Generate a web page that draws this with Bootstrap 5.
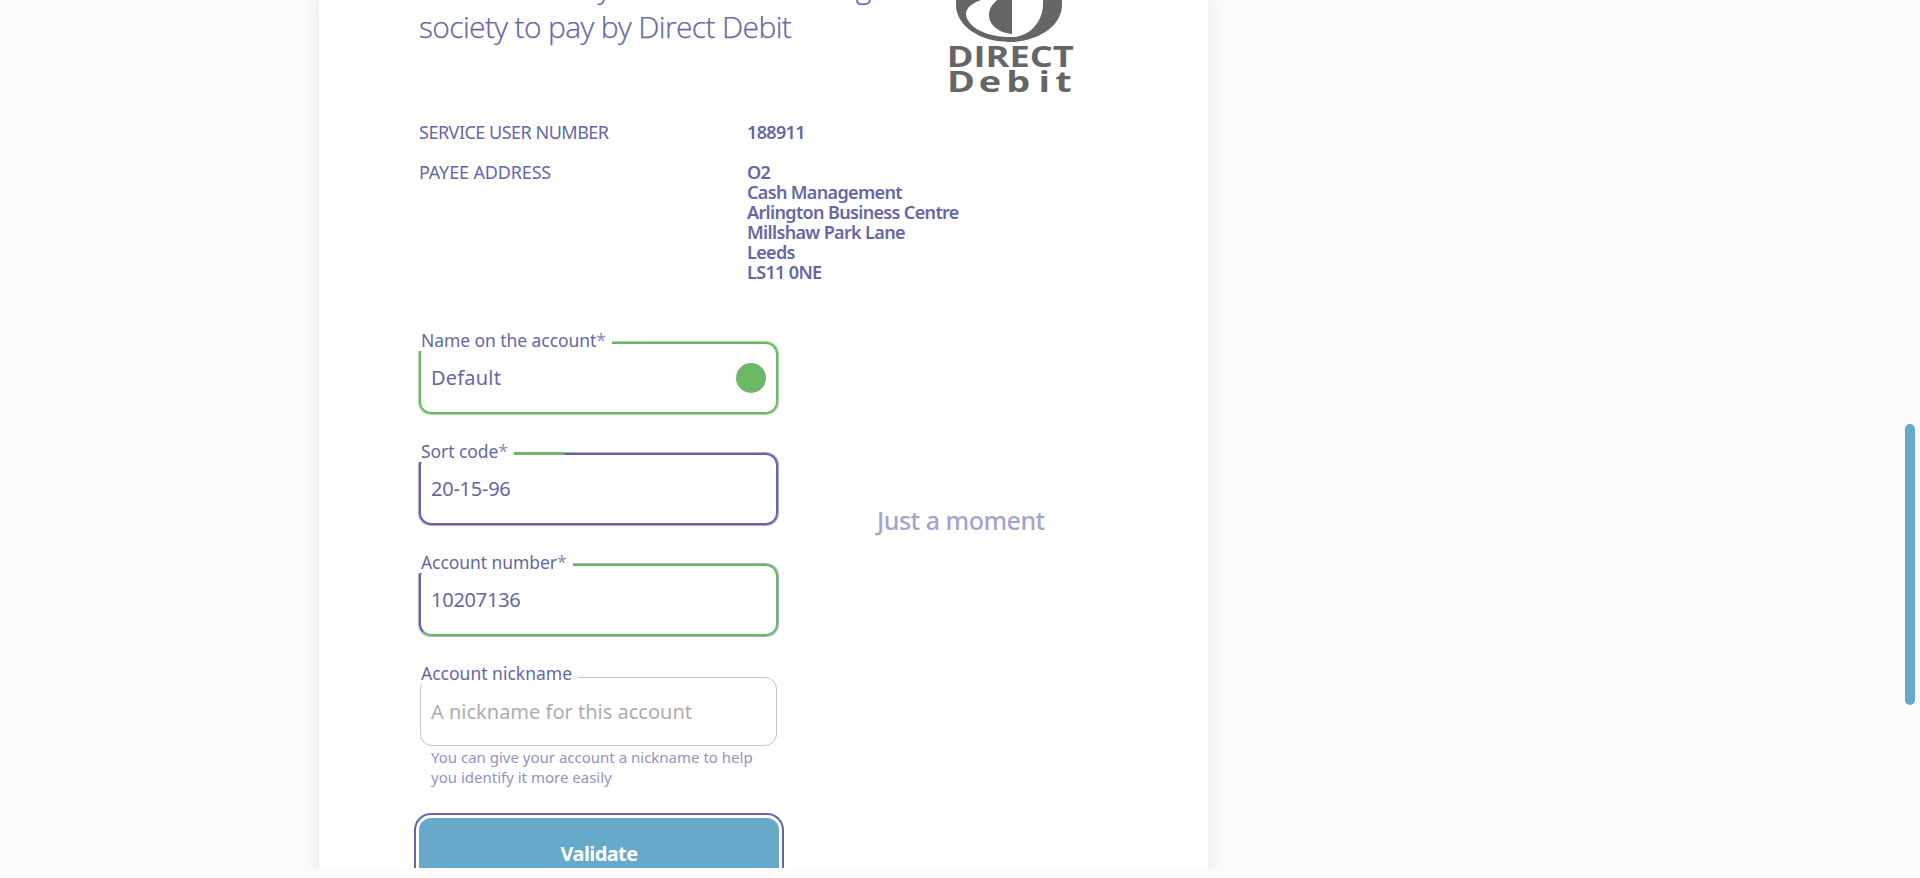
<!DOCTYPE html>
<html lang="en">
<head>
<meta charset="utf-8">
<meta name="viewport" content="width=device-width, initial-scale=1">
<title>Direct Debit</title>
<link href="https://cdn.jsdelivr.net/npm/bootstrap@5.3.0/dist/css/bootstrap.min.css" rel="stylesheet">
<style>
:root{--ink:#6567a5;--ok:#6cb867;--sea:#66a9cb}
body{background:#fbfbfb;color:var(--ink);font-family:"Noto Sans","Open Sans",sans-serif;height:878px;overflow:hidden}
.viewport{height:868px;overflow:hidden}
.sheet{width:889px;height:900px;margin-left:319px;padding-left:100px;background:#fff;box-shadow:0 0 16px rgba(0,0,0,.09)}
.masthead{height:122px}
.masthead h1{width:528px;margin:-33px 0 0;font-family:"Open Sans",sans-serif;font-size:30px;line-height:40px;font-weight:300;letter-spacing:-.64px;-webkit-text-stroke:.25px var(--ink);white-space:nowrap}
.logo{width:128px;height:96px;overflow:visible}
.facts{font-size:18px;line-height:20px}
.facts dt{width:328px;font-weight:400;letter-spacing:-.15px}
.facts dt.tight{letter-spacing:-.5px}
.facts dd{font-weight:600;margin:0;letter-spacing:-.65px}
.service{height:40px}
.account{padding-top:60px}
.entry{width:360px}
.field{position:relative;width:359px;height:72px;margin-bottom:39px;border:2px solid var(--ink);border-radius:12px;box-shadow:0 0 0 1px rgba(101,103,165,.55);padding:22px 9px 0 10px;font-size:20px;line-height:24px;letter-spacing:-.25px}
.field label{position:absolute;left:-3px;top:-15px;height:22px;padding:0 6px 0 3px;background:#fff;font-size:17.5px;line-height:23px;letter-spacing:-.07px;white-space:nowrap}
.field label i{font-style:normal;opacity:.75}
.field .dot{position:absolute;right:10px;top:19px;width:30px;height:30px;border-radius:50%;background:var(--ok)}
.field.done{border-color:var(--ok);box-shadow:0 0 0 1px rgba(108,184,103,.55);letter-spacing:.2px}
.field.sweep{border-color:var(--ok);border-left-color:var(--ink);margin-bottom:41px}
.field .trace{position:absolute;left:91px;top:-3px;width:54px;height:3px;background:var(--ok);clip-path:polygon(0 0,90% 0,100% 100%,0 100%)}
.field.idle{width:357px;height:69px;margin:0 0 0 1px;border:1px solid #c5c5c5;box-shadow:none;color:#adadad;letter-spacing:0}
.field.idle label{color:var(--ink);left:-2px;top:-16px;padding-left:2px;letter-spacing:0}
.hint{font-size:15px;line-height:20px;color:#9293c3;margin:1px 0 0 12px;white-space:nowrap}
.validate,.validate:hover{height:70px;margin-top:31px;border-radius:12px;border:0;background:var(--sea);color:#fff;font-weight:700;font-size:20px;line-height:24px;letter-spacing:-.6px;outline:2px solid var(--ink);outline-offset:3px;padding:1px 0 0}
.wait{font-size:25px;line-height:30px;font-weight:500;letter-spacing:-.5px;color:#a5a3cf;margin:163px 0 0 98px;white-space:nowrap}
.thumb{position:fixed;left:1905px;top:423.5px;width:10px;height:281px;border-radius:5px;background:var(--sea)}
</style>
</head>
<body>
<main class="viewport">
<section class="sheet">
  <header class="masthead d-flex align-items-start">
    <h1>Instruction to your bank or building<br>society to pay by Direct Debit</h1>
    <svg class="logo" viewBox="0 0 128 96" role="img" aria-label="Direct Debit">
      <g fill="#666" font-family="Open Sans, sans-serif" font-weight="700" font-size="28">
        <path fill-rule="evenodd" d="M9 5a53 37 0 0 0 106 0V-20H9ZM42-2C27 1 19 7 19 14C20 27 39 37 63 37C82 38 96 22 96 4V-20H42Z"/>
        <path d="M65-5V34C52 33 42 25 42 15C42 6 49 0 58-5Z"/>
        <text x="-.3" y="67" textLength="127" lengthAdjust="spacingAndGlyphs">DIRECT</text>
        <text transform="scale(1.35 1)" x="0 23.6 43.8 67.8 80.2" y="92">Debit</text>
      </g>
    </svg>
  </header>
  <dl class="facts mb-0">
    <div class="service d-flex"><dt class="tight">SERVICE USER NUMBER</dt><dd>188911</dd></div>
    <div class="d-flex"><dt>PAYEE ADDRESS</dt><dd>O2<br>Cash Management<br>Arlington Business Centre<br>Millshaw Park Lane<br>Leeds<br>LS11 0NE</dd></div>
  </dl>
  <div class="account d-flex">
    <div class="entry">
      <div class="field done"><label>Name on the account<i>*</i></label>Default<span class="dot"></span></div>
      <div class="field"><span class="trace"></span><label>Sort code<i>*</i></label>20-15-96</div>
      <div class="field sweep"><label>Account number<i>*</i></label>10207136</div>
      <div class="field idle"><label>Account nickname</label>A nickname for this account</div>
      <p class="hint">You can give your account a nickname to help<br>you identify it more easily</p>
      <button class="btn validate w-100" type="button">Validate</button>
    </div>
    <p class="wait">Just a moment</p>
  </div>
</section>
</main>
<div class="thumb"></div>
<script src="https://cdn.jsdelivr.net/npm/bootstrap@5.3.0/dist/js/bootstrap.bundle.min.js"></script>
</body>
</html>
